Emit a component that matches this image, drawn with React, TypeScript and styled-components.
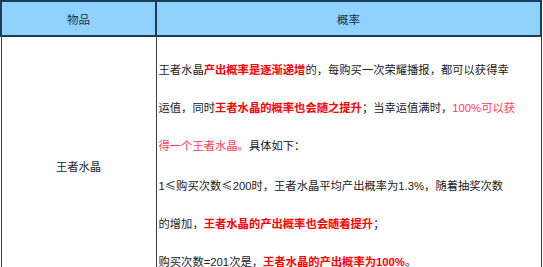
import React from "react";
import styled, { createGlobalStyle } from "styled-components";

const Global = createGlobalStyle`
  html, body {
    margin: 0;
    padding: 0;
    background: #ffffff;
  }
  body {
    font-family: "Liberation Sans", "Noto Sans CJK SC", sans-serif;
  }
`;

export default function App() {
  return (
    <>
      <Global />
      <Table>
        <colgroup>
          <col style={{ width: 155 }} />
          <col />
        </colgroup>
        <thead>
          <tr>
            <Th>物品</Th>
            <Th>概率</Th>
          </tr>
        </thead>
        <tbody>
          <tr>
            <ItemCell>王者水晶</ItemCell>
            <RateCell>
              <Para>
                王者水晶<Strong>产出概率是逐渐递增</Strong>的，每购买一次荣耀播报，都可以获得幸<br />
                运值，同时<Strong>王者水晶的概率也会随之提升</Strong>；当幸运值满时，<Pink>100%可以获<br />
                得一个王者水晶。</Pink>具体如下：
              </Para>
              <Para>
                1<Sym>≤</Sym>购买次数<Sym>≤</Sym>200时，王者水晶平均产出概率为1.3%，随着抽奖次数<br />
                的增加，<Strong>王者水晶的产出概率也会随着提升</Strong>；
              </Para>
              <Para>
                购买次数=201次是，<Strong>王者水晶的产出概率为100%</Strong>。
              </Para>
            </RateCell>
          </tr>
        </tbody>
      </Table>
    </>
  );
}

const Table = styled.table`
  width: 542px;
  border-collapse: collapse;
  table-layout: fixed;
  font-size: 11.3px;
  color: #222;
`;

const Th = styled.th`
  height: 33px;
  padding: 0;
  background: #8fd3fd;
  border: 2px solid #1f3b5c;
  color: #1b2f4a;
  font-size: 11.5px;
  font-weight: normal;
  text-align: center;
  vertical-align: middle;
`;

const ItemCell = styled.td`
  border: 1px solid #3a3f45;
  border-top: none;
  text-align: center;
  vertical-align: middle;
  color: #222;
`;

const RateCell = styled.td`
  border: 1px solid #3a3f45;
  border-top: none;
  padding: 14px 2px 13px 2px;
  vertical-align: top;
  white-space: nowrap;
`;

const Para = styled.p`
  margin: 0;
  line-height: 38.2px;
`;

const Sym = styled.span`
  font-family: "Noto Sans CJK SC", sans-serif;
`;

const Strong = styled.b`
  color: #ff0000;
  font-weight: bold;
`;

const Pink = styled.span`
  color: #ff3a5c;
`;
